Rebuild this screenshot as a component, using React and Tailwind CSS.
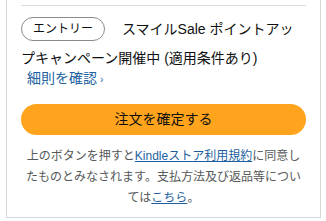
import React from "react";

export default function App() {
  const font = { fontFamily: '"Liberation Sans", "Noto Sans CJK JP", sans-serif' };
  return (
    <div className="w-[326px] h-[221px] bg-white overflow-hidden" style={font}>
      <div className="ml-[6px] w-[315px] border-x border-b border-[#d5d9d9] px-[14px] pb-[8px]">
        <div className="pt-[5px]">
          <div className="border-t border-[#dddddd]" />
        </div>
        <p className="mt-[9px] text-[14px] leading-[29px] text-[#0f1111]">
          <span className="inline-block align-middle h-[24px] leading-[22px] px-[11px] border border-[#888c8c] rounded-full text-[12px] mr-[17px] -mt-[2px]">
            エントリー
          </span>
          スマイルSale ポイントアッ
          <br />
          プキャンペーン開催中 (適用条件あり)
        </p>
        <div className="-mt-[4px] ml-[6px] text-[14px] leading-[18px] text-[#2162a1]">
          細則を確認<span className="text-[10px] ml-[3px]">›</span>
        </div>
        <button className="mt-[15px] w-full h-[31px] rounded-full bg-[#ffa41c] text-[14px] text-[#0f1111] flex items-center justify-center">
          注文を確定する
        </button>
        <p className="mt-[11px] text-center text-[12px] leading-[21px] text-[#565959]">
          上のボタンを押すと
          <span className="text-[#1c5ea0] underline">Kindleストア利用規約</span>
          に同意したものとみなされます。支払方法及び返品等については
          <span className="text-[#1c5ea0] underline">こちら</span>。
        </p>
      </div>
    </div>
  );
}
